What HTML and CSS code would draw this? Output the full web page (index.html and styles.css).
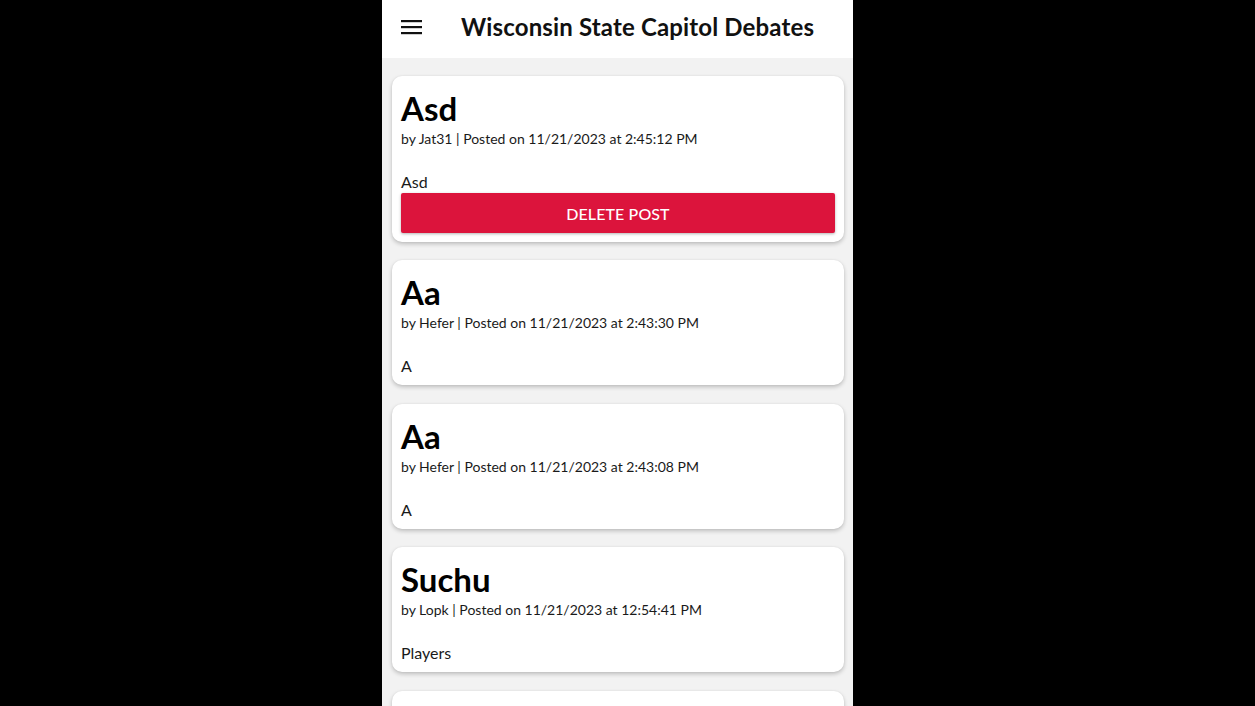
FILE: index.html
```html
<!DOCTYPE html>
<html lang="en">
<head>
<meta charset="utf-8">
<title>Wisconsin State Capitol Debates</title>
<link rel="stylesheet" href="styles.css">
</head>
<body>
<div class="screen">
  <div class="phone">
    <header class="appbar">
      <button class="menu" aria-label="Menu">
        <svg width="22" height="16" viewBox="0 0 22 16"><rect x="0" y="1" width="21" height="2.2" fill="#111"/><rect x="0" y="7" width="21" height="2.2" fill="#111"/><rect x="0" y="13" width="21" height="2.2" fill="#111"/></svg>
      </button>
      <h1 class="apptitle">Wisconsin State Capitol Debates</h1>
    </header>
    <main class="feed">
      <article class="card">
        <h2 class="title">Asd</h2>
        <p class="meta">by Jat31 | Posted on 11/21/2023 at 2:45:12 PM</p>
        <p class="body">Asd</p>
        <button class="delete">DELETE POST</button>
      </article>
      <article class="card">
        <h2 class="title">Aa</h2>
        <p class="meta">by Hefer | Posted on 11/21/2023 at 2:43:30 PM</p>
        <p class="body">A</p>
      </article>
      <article class="card">
        <h2 class="title">Aa</h2>
        <p class="meta">by Hefer | Posted on 11/21/2023 at 2:43:08 PM</p>
        <p class="body">A</p>
      </article>
      <article class="card">
        <h2 class="title">Suchu</h2>
        <p class="meta">by Lopk | Posted on 11/21/2023 at 12:54:41 PM</p>
        <p class="body">Players</p>
      </article>
      <article class="card">
        <h2 class="title">&nbsp;</h2>
        <p class="meta">&nbsp;</p>
        <p class="body">&nbsp;</p>
      </article>
    </main>
  </div>
</div>
</body>
</html>
```

FILE: styles.css
```css
* { box-sizing: border-box; }
html, body {
  margin: 0;
  height: 100%;
  background: #000;
  overflow: hidden;
}
body {
  font-family: Lato, "Open Sans", "Liberation Sans", sans-serif;
  color: #111;
}
.screen {
  display: grid;
  grid-template-columns: 382px 471px 1fr;
  height: 706px;
}
.phone {
  grid-column: 2;
  background: #f2f2f2;
  height: 706px;
  overflow: hidden;
  display: flex;
  flex-direction: column;
}
.appbar {
  height: 58px;
  background: #fff;
  display: flex;
  align-items: center;
  flex-shrink: 0;
}
.menu {
  border: 0;
  background: none;
  padding: 0;
  margin-left: 19px;
  width: 22px;
  height: 16px;
  display: flex;
  margin-top: -4px;
}
.apptitle {
  margin: -4px 0 0 38px;
  font-size: 24px;
  font-weight: 700;
  color: #111;
  letter-spacing: 0.15px;
  line-height: 1;
}
.feed {
  padding: 18px 9px 0 10px;
  display: flex;
  flex-direction: column;
  gap: 18.4px;
}
.card {
  background: #fff;
  border-radius: 10px;
  box-shadow: 0 2px 4px rgba(0,0,0,0.22), 0 0 2px rgba(0,0,0,0.06);
  padding: 14px 9px 9px 9px;
  display: flex;
  flex-direction: column;
}
.title {
  margin: 0;
  font-size: 33px;
  line-height: 36px;
  font-weight: 700;
  color: #000;
}
.meta {
  margin: 4px 0 0;
  font-size: 14px;
  line-height: 18px;
  color: #1a1a1a;
}
.body {
  margin: 24px 0 0;
  font-size: 16px;
  line-height: 20px;
  color: #1a1a1a;
}
.delete {
  margin-top: 1px;
  height: 40px;
  border: 0;
  border-radius: 2px;
  background: #dc143c;
  color: #fff;
  font-family: inherit;
  font-size: 16px;
  font-weight: 500;
  letter-spacing: 0.1px;
  box-shadow: 0 1px 3px rgba(0,0,0,0.3);
}
```
